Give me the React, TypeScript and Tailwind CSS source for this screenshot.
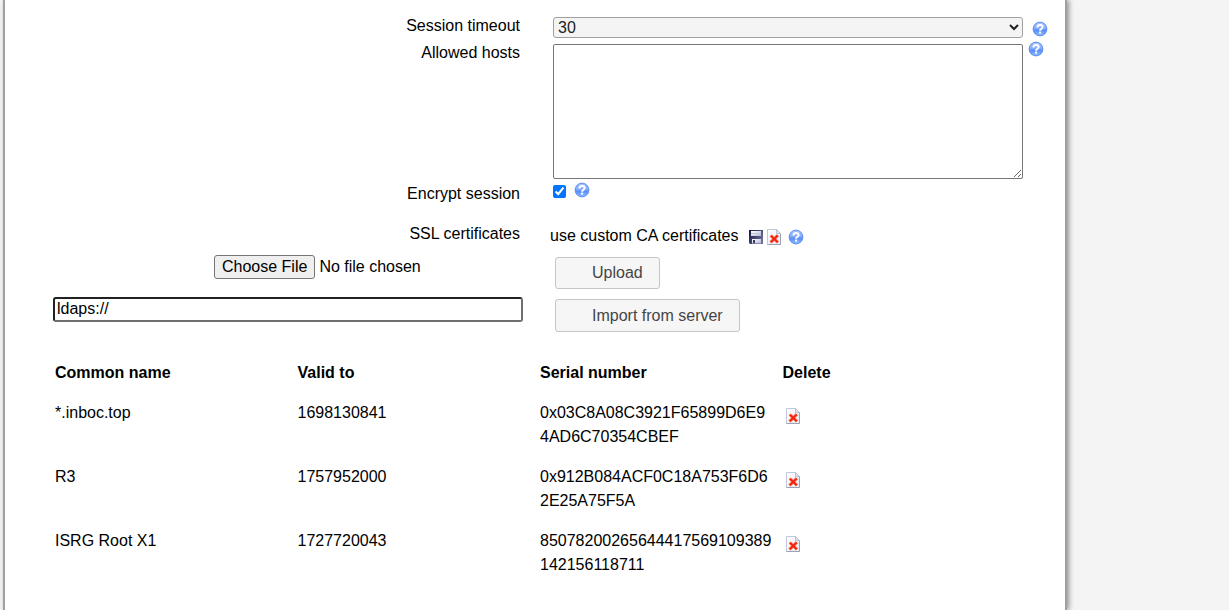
import type { ReactNode } from 'react';

function HelpIcon() {
  return (
    <svg viewBox="0 0 16 16" className="block size-4 shrink-0" aria-hidden="true">
      <defs>
        <linearGradient id="helpFill" x1="0" y1="0" x2="0" y2="1">
          <stop offset="0" stopColor="#a9c6ff" />
          <stop offset="0.45" stopColor="#86adfb" />
          <stop offset="0.6" stopColor="#5b8dfa" />
          <stop offset="1" stopColor="#8cc0ff" />
        </linearGradient>
      </defs>
      <circle cx="8" cy="8" r="6.9" fill="url(#helpFill)" stroke="#5585ea" strokeWidth="0.9" />
      <path
        d="M5.5 6.4C5.5 4.7 6.7 4 8.1 4C9.6 4 10.6 4.8 10.6 6C10.6 7.7 8.1 7.8 8.1 9.7"
        fill="none"
        stroke="#fff"
        strokeWidth="2"
      />
      <rect x="7" y="10.6" width="2.2" height="2" fill="#fff" />
    </svg>
  );
}

function SaveIcon() {
  return (
    <svg viewBox="0 0 16 16" className="block size-4 shrink-0" aria-hidden="true">
      <defs>
        <linearGradient id="diskBody" x1="0" y1="0" x2="1" y2="0.6">
          <stop offset="0" stopColor="#14143a" />
          <stop offset="1" stopColor="#6a6c9c" />
        </linearGradient>
        <linearGradient id="diskLabel" x1="0" y1="0" x2="1" y2="1">
          <stop offset="0" stopColor="#ffffff" />
          <stop offset="1" stopColor="#b4bad4" />
        </linearGradient>
      </defs>
      <path d="M1 1H15V15H2L1 14Z" fill="url(#diskBody)" />
      <rect x="3" y="2" width="10" height="5" fill="url(#diskLabel)" />
      <rect x="3" y="4" width="10" height="1" fill="#c2c7dc" />
      <rect x="4" y="10" width="9" height="4.4" fill="url(#diskLabel)" />
      <rect x="5" y="11" width="2" height="3" fill="#3c3d68" />
    </svg>
  );
}

function DeleteIcon() {
  return (
    <svg viewBox="0 0 16 16" className="block size-4 shrink-0" aria-hidden="true">
      <defs>
        <linearGradient id="pageFill" x1="0" y1="0" x2="1" y2="1">
          <stop offset="0" stopColor="#ffffff" />
          <stop offset="1" stopColor="#e6ebf6" />
        </linearGradient>
      </defs>
      <path d="M1.5 0.5H10.5L14.5 4.5V15.5H1.5Z" fill="url(#pageFill)" stroke="#c3c8d6" />
      <path d="M10.5 0.5V4.5H14.5Z" fill="#e3e8f2" stroke="#aeb5c8" strokeWidth="0.8" />
      <path d="M14.5 5V15.5H1.5" fill="none" stroke="#9ca1b3" />
      <path d="M4.6 6.4L12 13.4M12 6.2L4.4 13.6" stroke="#ff9a84" strokeWidth="3.2" />
      <path d="M4.9 6.7L11.8 13.2M11.7 6.5L4.7 13.3" stroke="#f5260f" strokeWidth="2.2" />
    </svg>
  );
}

function HelpLink({ className }: { className: string }) {
  return (
    <a href="#help" aria-label="Help" className={className}>
      <HelpIcon />
    </a>
  );
}

function Row({ label, children, className }: { label: ReactNode; children: ReactNode; className: string }) {
  return (
    <div className={`grid grid-cols-[470px_minmax(0,1fr)] items-start gap-x-[27px] ${className}`}>
      <div className="text-right">{label}</div>
      <div className="flex items-start">{children}</div>
    </div>
  );
}

const certificates = [
  { name: '*.inboc.top', validTo: '1698130841', serial: '0x03C8A08C3921F65899D6E94AD6C70354CBEF' },
  { name: 'R3', validTo: '1757952000', serial: '0x912B084ACF0C18A753F6D62E25A75F5A' },
  { name: 'ISRG Root X1', validTo: '1727720043', serial: '85078200265644417569109389142156118711' },
];

export default function App() {
  return (
    <div className="flex min-h-screen bg-[#f4f4f4] pl-[3px] font-['Liberation_Sans',Arial,sans-serif] text-base leading-6 text-black">
      <main className="w-full max-w-[1064px] border-x-2 border-[#a09fa5] bg-white pt-[14px] pl-12 shadow-[2px_0_5px_rgba(0,0,0,0.4)]">
        <form onSubmit={(e) => e.preventDefault()}>
          <Row className="pb-[3px]" label={<label htmlFor="timeout" className="pr-[3px]">Session timeout</label>}>
            <select
              id="timeout"
              defaultValue="30"
              className="mt-[3px] ml-[3px] h-[21px] w-[470px] rounded-[3px] border border-[#a0a0a0] bg-[#f4f4f4] leading-5 text-[#222]"
            >
              <option>30</option>
              <option>60</option>
            </select>
            <HelpLink className="mt-[7px] ml-[9px]" />
          </Row>

          <Row className="pb-[3px]" label={<label htmlFor="hosts" className="pr-[3px]">Allowed hosts</label>}>
            <textarea
              id="hosts"
              className="mt-[3px] ml-[3px] block h-[135px] w-[470px] rounded-[2px] border border-[#767676] bg-white p-[2px]"
            />
            <HelpLink className="ml-[5px]" />
          </Row>

          <Row className="pb-4" label={<label htmlFor="encrypt" className="pr-[3px]">Encrypt session</label>}>
            <input id="encrypt" type="checkbox" defaultChecked className="mt-[3px] ml-[3px] size-[13px]" />
            <HelpLink className="ml-2" />
          </Row>

          <Row className="pb-[7px]" label={<span className="pr-[3px]">SSL certificates</span>}>
            <span className="mt-[2px]">use custom CA certificates</span>
            <button type="button" aria-label="Download certificates" className="mt-[7px] ml-[9px]">
              <SaveIcon />
            </button>
            <button type="button" aria-label="Delete certificates" className="mt-[7px] ml-[2px]">
              <DeleteIcon />
            </button>
            <HelpLink className="mt-[7px] ml-[6px]" />
          </Row>

          <Row
            className="pb-2"
            label={
              <input
                type="file"
                aria-label="Certificate file"
                className="ml-auto block h-6 w-[309px] text-left leading-[22px] file:h-6 file:rounded-[3px] file:border file:border-[#767676] file:bg-[#efefef] file:px-[7px] file:text-black"
              />
            }
          >
            <button
              type="submit"
              className="mt-[2px] ml-[5px] h-8 rounded-[3px] border border-[#c5c5c5] bg-[#f6f6f6] pr-4 pl-9 leading-[30px] text-[#454545]"
            >
              Upload
            </button>
          </Row>

          <Row
            className="pb-[21px]"
            label={
              <input
                type="text"
                aria-label="Server address"
                defaultValue="ldaps://"
                className="block h-[25px] w-full rounded-[3px] border-2 border-t-[#212121] border-r-[#6f6f6f] border-b-[#6f6f6f] border-l-[#212121] bg-white px-[2px] pb-[2px] text-left leading-[19px] outline-none"
              />
            }
          >
            <button
              type="button"
              className="mt-[2px] ml-[5px] h-[33px] rounded-[3px] border border-[#c5c5c5] bg-[#f6f6f6] pr-4 pl-9 leading-[31px] text-[#454545]"
            >
              Import from server
            </button>
          </Row>

          <table className="w-[970px] table-fixed border-collapse text-left align-top">
            <thead>
              <tr>
                <th className="px-[2px] py-2 font-bold">Common name</th>
                <th className="px-[2px] py-2 font-bold">Valid to</th>
                <th className="px-[2px] py-2 font-bold">Serial number</th>
                <th className="px-[2px] py-2 font-bold">Delete</th>
              </tr>
            </thead>
            <tbody>
              {certificates.map((cert) => (
                <tr key={cert.name} className="align-top">
                  <td className="px-[2px] py-2">{cert.name}</td>
                  <td className="px-[2px] py-2">{cert.validTo}</td>
                  <td className="py-2 pr-2 pl-[2px] break-all">{cert.serial}</td>
                  <td className="py-2 pl-1">
                    <button type="button" aria-label={`Delete ${cert.name}`} className="mt-[7px] block">
                      <DeleteIcon />
                    </button>
                  </td>
                </tr>
              ))}
            </tbody>
          </table>
        </form>
      </main>
    </div>
  );
}
